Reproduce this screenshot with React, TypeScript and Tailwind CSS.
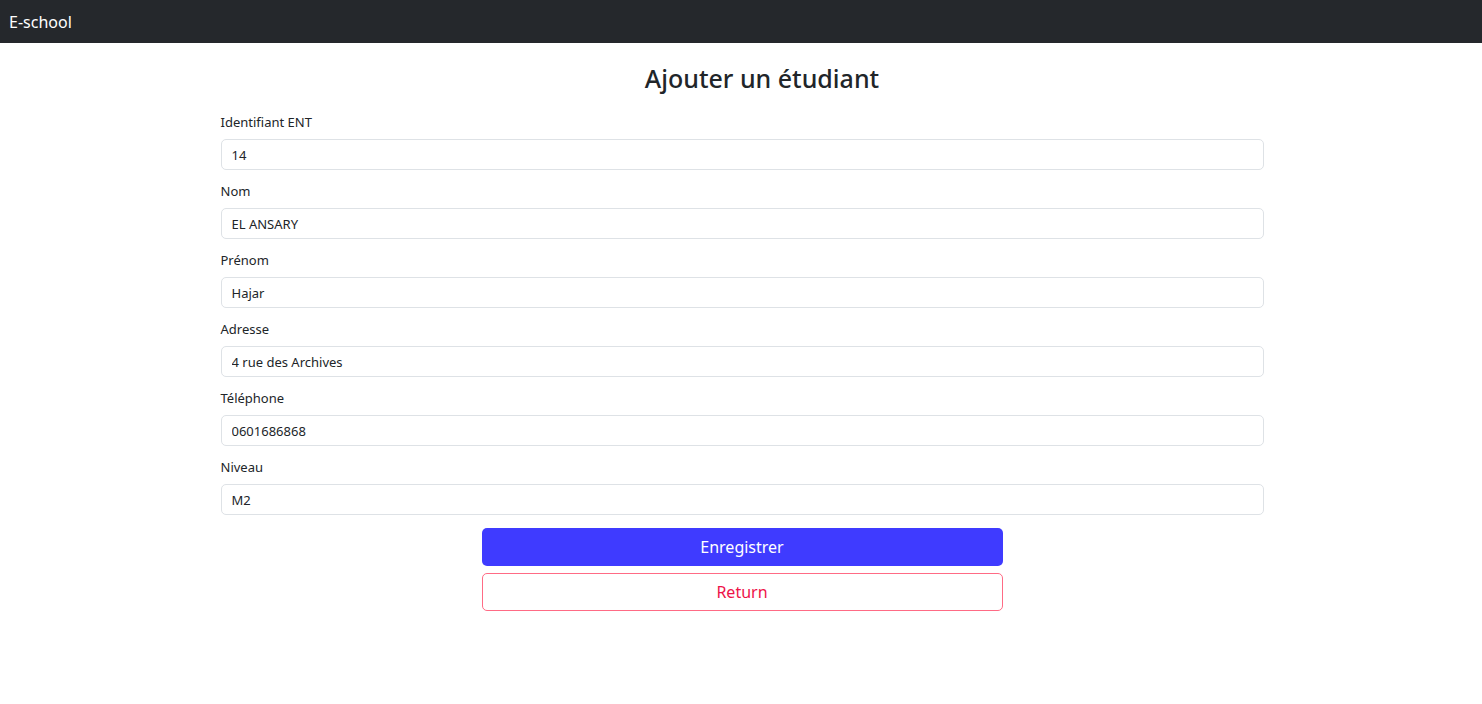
const fields = [
  { label: "Identifiant ENT", value: "14" },
  { label: "Nom", value: "EL ANSARY" },
  { label: "Prénom", value: "Hajar" },
  { label: "Adresse", value: "4 rue des Archives" },
  { label: "Téléphone", value: "0601686868" },
  { label: "Niveau", value: "M2" },
];

export default function App() {
  return (
    <div className="min-h-screen bg-white font-['Noto_Sans',sans-serif] text-[#212529]">
      <nav className="flex h-[43px] items-center bg-[#25282c] px-[9px]">
        <span className="text-[16px] text-white">E-school</span>
      </nav>

      <main className="mx-auto w-[1043px] translate-x-[1px]">
        <h1 className="pt-[18px] pb-[17px] pl-[40px] text-center text-[25px] leading-[34px] font-medium">
          Ajouter un étudiant
        </h1>

        <form onSubmit={(e) => e.preventDefault()}>
          {fields.map((f) => (
            <div key={f.label} className="mb-[11px]">
              <label className="mb-[6px] block text-[13px] leading-[21px]">{f.label}</label>
              <input
                defaultValue={f.value}
                className="block h-[31px] w-full rounded-[5px] border border-[#dee2e6] px-[10px] text-[13px] text-[#212529] outline-none"
              />
            </div>
          ))}

          <div className="mx-auto mt-[13px] flex w-[521px] flex-col gap-[7px]">
            <button
              type="submit"
              className="h-[38px] rounded-[5px] bg-[#3f3bff] text-[16px] text-white"
            >
              Enregistrer
            </button>
            <button
              type="button"
              className="h-[38px] rounded-[5px] border border-[#ff6b85] bg-white text-[16px] text-[#ee1248]"
            >
              Return
            </button>
          </div>
        </form>
      </main>
    </div>
  );
}
